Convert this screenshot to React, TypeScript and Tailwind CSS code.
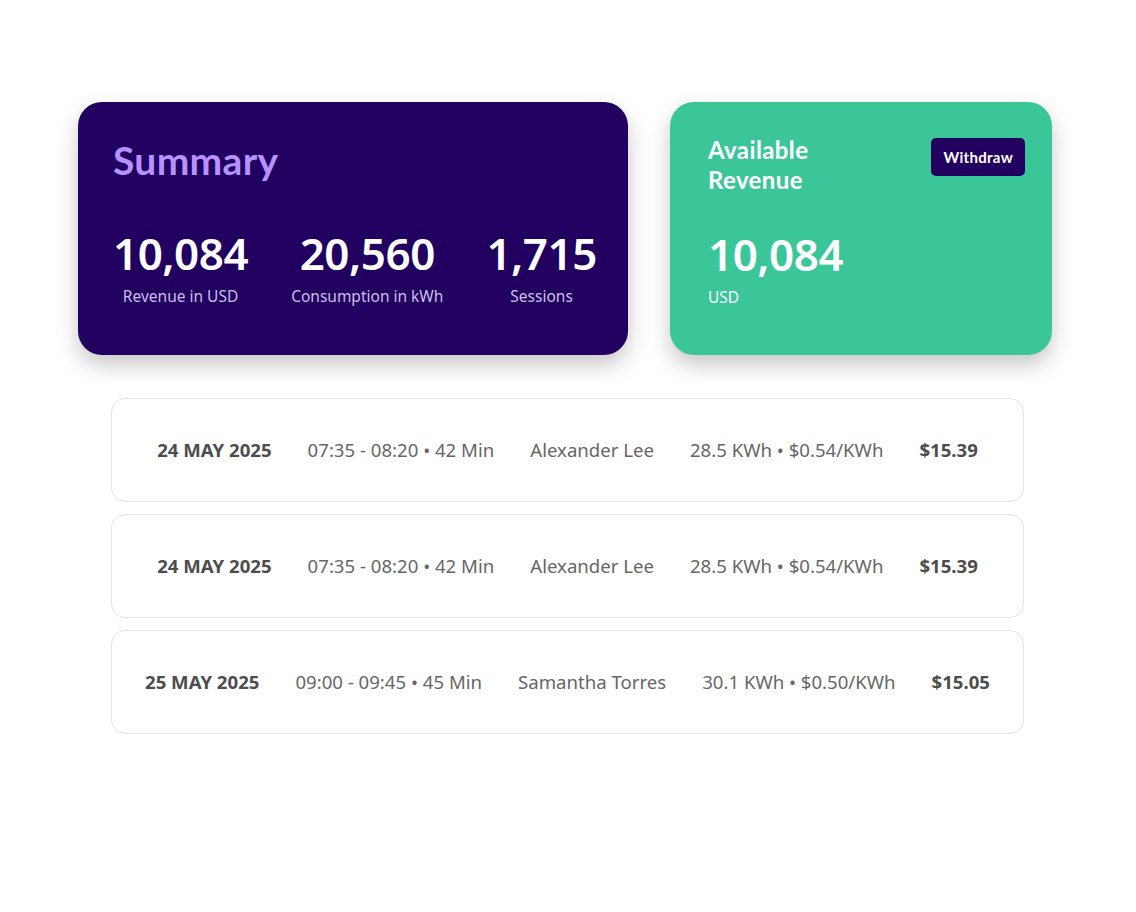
const sessions = [
  { date: '24 MAY 2025', time: '07:35 - 08:20 • 42 Min', name: 'Alexander Lee', usage: '28.5 KWh • $0.54/KWh', total: '$15.39' },
  { date: '24 MAY 2025', time: '07:35 - 08:20 • 42 Min', name: 'Alexander Lee', usage: '28.5 KWh • $0.54/KWh', total: '$15.39' },
  { date: '25 MAY 2025', time: '09:00 - 09:45 • 45 Min', name: 'Samantha Torres', usage: '30.1 KWh • $0.50/KWh', total: '$15.05' },
]

const stats = [
  { value: '10,084', label: 'Revenue in USD' },
  { value: '20,560', label: 'Consumption in kWh' },
  { value: '1,715', label: 'Sessions' },
]

export default function App() {
  return (
    <div className="min-h-screen w-[1136px] bg-white pt-[102px] pl-[78px] font-['Noto_Sans',sans-serif]">
      <div className="flex gap-[42px]">
        <SummaryCard />
        <RevenueCard />
      </div>

      <div className="ml-[33px] mt-[43px] flex w-[913px] flex-col gap-3">
        {sessions.map((s, i) => (
          <SessionRow key={i} {...s} />
        ))}
      </div>
    </div>
  )
}

function SummaryCard() {
  return (
    <div className="h-[253px] w-[550px] rounded-[24px] bg-[#21005f] px-[35px] pt-[34px] shadow-[0_10px_22px_rgba(0,0,0,0.22)]">
      <h2 className="font-['Lato',sans-serif] text-[39px] font-bold leading-[48px] tracking-[0.3px] text-[#b592ff]">Summary</h2>
      <div className="mt-[44px] flex gap-[43px]">
        {stats.map((s) => (
          <div key={s.label} className="flex flex-col items-center">
            <span className="text-[44px] font-semibold leading-[50px] tracking-[-0.5px] text-white">{s.value}</span>
            <span className="mt-[7px] whitespace-nowrap text-[15.5px] leading-[22px] text-[#c9bde9]">{s.label}</span>
          </div>
        ))}
      </div>
    </div>
  )
}

function RevenueCard() {
  return (
    <div className="h-[253px] w-[382px] rounded-[24px] bg-[#3ac699] pl-[38px] pr-[27px] pt-[33px] shadow-[0_10px_22px_rgba(0,0,0,0.22)]">
      <div className="flex items-start justify-between">
        <h2 className="font-['Lato',sans-serif] text-[24px] font-bold leading-[30px] tracking-[0.4px] text-white">
          Available
          <br />
          Revenue
        </h2>
        <button className="mt-[3px] rounded-[5px] bg-[#21005f] px-[12px] py-[8px] font-['Lato',sans-serif] text-[15px] font-bold leading-[22px] tracking-[0.3px] text-white">
          Withdraw
        </button>
      </div>
      <div className="mt-[34px] flex flex-col items-start">
        <span className="text-[44px] font-semibold leading-[50px] tracking-[-0.5px] text-white">10,084</span>
        <span className="mt-[7px] text-[15.5px] leading-[22px] text-white">USD</span>
      </div>
    </div>
  )
}

function SessionRow({ date, time, name, usage, total }: { date: string; time: string; name: string; usage: string; total: string }) {
  return (
    <div className="flex h-[104px] items-center justify-center gap-9 rounded-[14px] border border-[#e4e4e4] bg-white text-[18.6px] text-[#666]">
      <span className="font-bold text-[#4d4d4d]">{date}</span>
      <span>{time}</span>
      <span>{name}</span>
      <span>{usage}</span>
      <span className="font-bold text-[#4d4d4d]">{total}</span>
    </div>
  )
}
